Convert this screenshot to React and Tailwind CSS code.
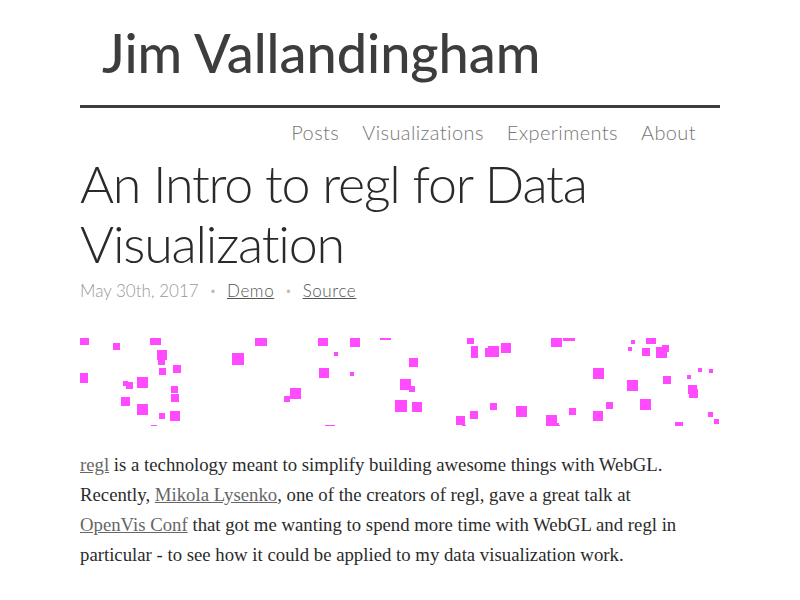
import React from "react";

const S = [
  [80,336,9],[150,334,11],[113,343,7],[157,350,10],[158,358,7],[232,353,12],[78,373,10],
  [159,368,7],[173,365,8],[123,381,5],[126,382,7],[137,377,11],[171,386,7],[171,394,8],
  [121,397,9],[137,404,11],[159,413,6],[170,411,10],[151,425,6],
  [255,334,12],[318,336,10],[350,337,10],[380,329,11],[334,352,4],[319,368,10],[350,372,4],
  [284,396,6],[290,388,11],[395,400,12],[325,425,10],[400,379,11],[409,386,6],
  [467,337,7],[471,346,7],[471,351,7],[485,348,9],[488,346,11],[501,343,10],[551,336,11],
  [409,358,9],[412,402,10],[490,403,7],[516,406,11],[470,411,8],[456,416,9],[546,415,11],
  [555,423,4],[462,425,4],
  [563,329,12],[631,340,4],[646,334,10],[628,347,4],[642,348,8],[656,347,11],[662,345,7],
  [593,368,11],[627,380,11],[663,376,8],[687,375,4],[698,368,4],[709,369,4],[688,385,9],
  [689,389,9],[640,399,11],[606,402,7],[569,408,7],[593,411,10],[708,412,5],[714,419,5],
  [675,422,8],[556,425,4],
];

const sans = { fontFamily: "Lato, 'Noto Sans', sans-serif" };

export default function App() {
  return (
    <div className="min-h-screen bg-white">
      <div className="mx-auto w-[640px]">
        <header className="pt-[19px]">
          <h1
            className="pl-[22px] text-[54px] leading-[68px] font-medium text-[#3d3d3d]"
            style={sans}
          >
            Jim Vallandingham
          </h1>
          <div className="mt-[18px] h-[3px] bg-[#3d3d3d]" />
          <nav
            className="flex justify-end gap-[23px] pr-[24px] pt-[11px] text-[20px] leading-[26px] tracking-[0.4px] text-[#777]"
            style={{ ...sans, fontWeight: 300 }}
          >
            <span>Posts</span>
            <span>Visualizations</span>
            <span>Experiments</span>
            <span>About</span>
          </nav>
        </header>
        <h2
          className="mt-[8px] text-[52px] leading-[60px] tracking-[-1.2px] text-[#2a2a2a]"
          style={{ ...sans, fontWeight: 300 }}
        >
          An Intro to regl for Data Visualization
        </h2>
        <div
          className="mt-[6px] flex items-center gap-[11px] text-[17px] leading-[24px] text-[#999]"
          style={{ ...sans, fontWeight: 300 }}
        >
          <span>May 30th, 2017</span>
          <span className="text-[#bbb] text-[11px]">•</span>
          <span className="text-[#555] underline tracking-[0.6px]">Demo</span>
          <span className="text-[#bbb] text-[11px]">•</span>
          <span className="text-[#555] underline tracking-[0.6px]">Source</span>
        </div>
        <div className="mt-[35px] h-[88px] overflow-hidden">
          <svg width="640" height="88" viewBox="80 338 640 88">
            {S.map(([x, y, s], i) => (
              <rect key={i} x={x} y={y} width={s} height={s} fill="#ff4aff" />
            ))}
          </svg>
        </div>
        <p
          className="mt-[24px] text-[18.75px] leading-[30px] text-[#2b2b2b]"
          style={{ fontFamily: "'Liberation Serif', serif" }}
        >
          <span className="text-[#666] underline">regl</span> is a technology meant to simplify building awesome things with WebGL.
          <br />
          Recently, <span className="text-[#666] underline">Mikola Lysenko</span>, one of the creators of regl, gave a great talk at
          <br />
          <span className="text-[#666] underline">OpenVis Conf</span> that got me wanting to spend more time with WebGL and regl in
          <br />
          particular - to see how it could be applied to my data visualization work.
        </p>
      </div>
    </div>
  );
}
